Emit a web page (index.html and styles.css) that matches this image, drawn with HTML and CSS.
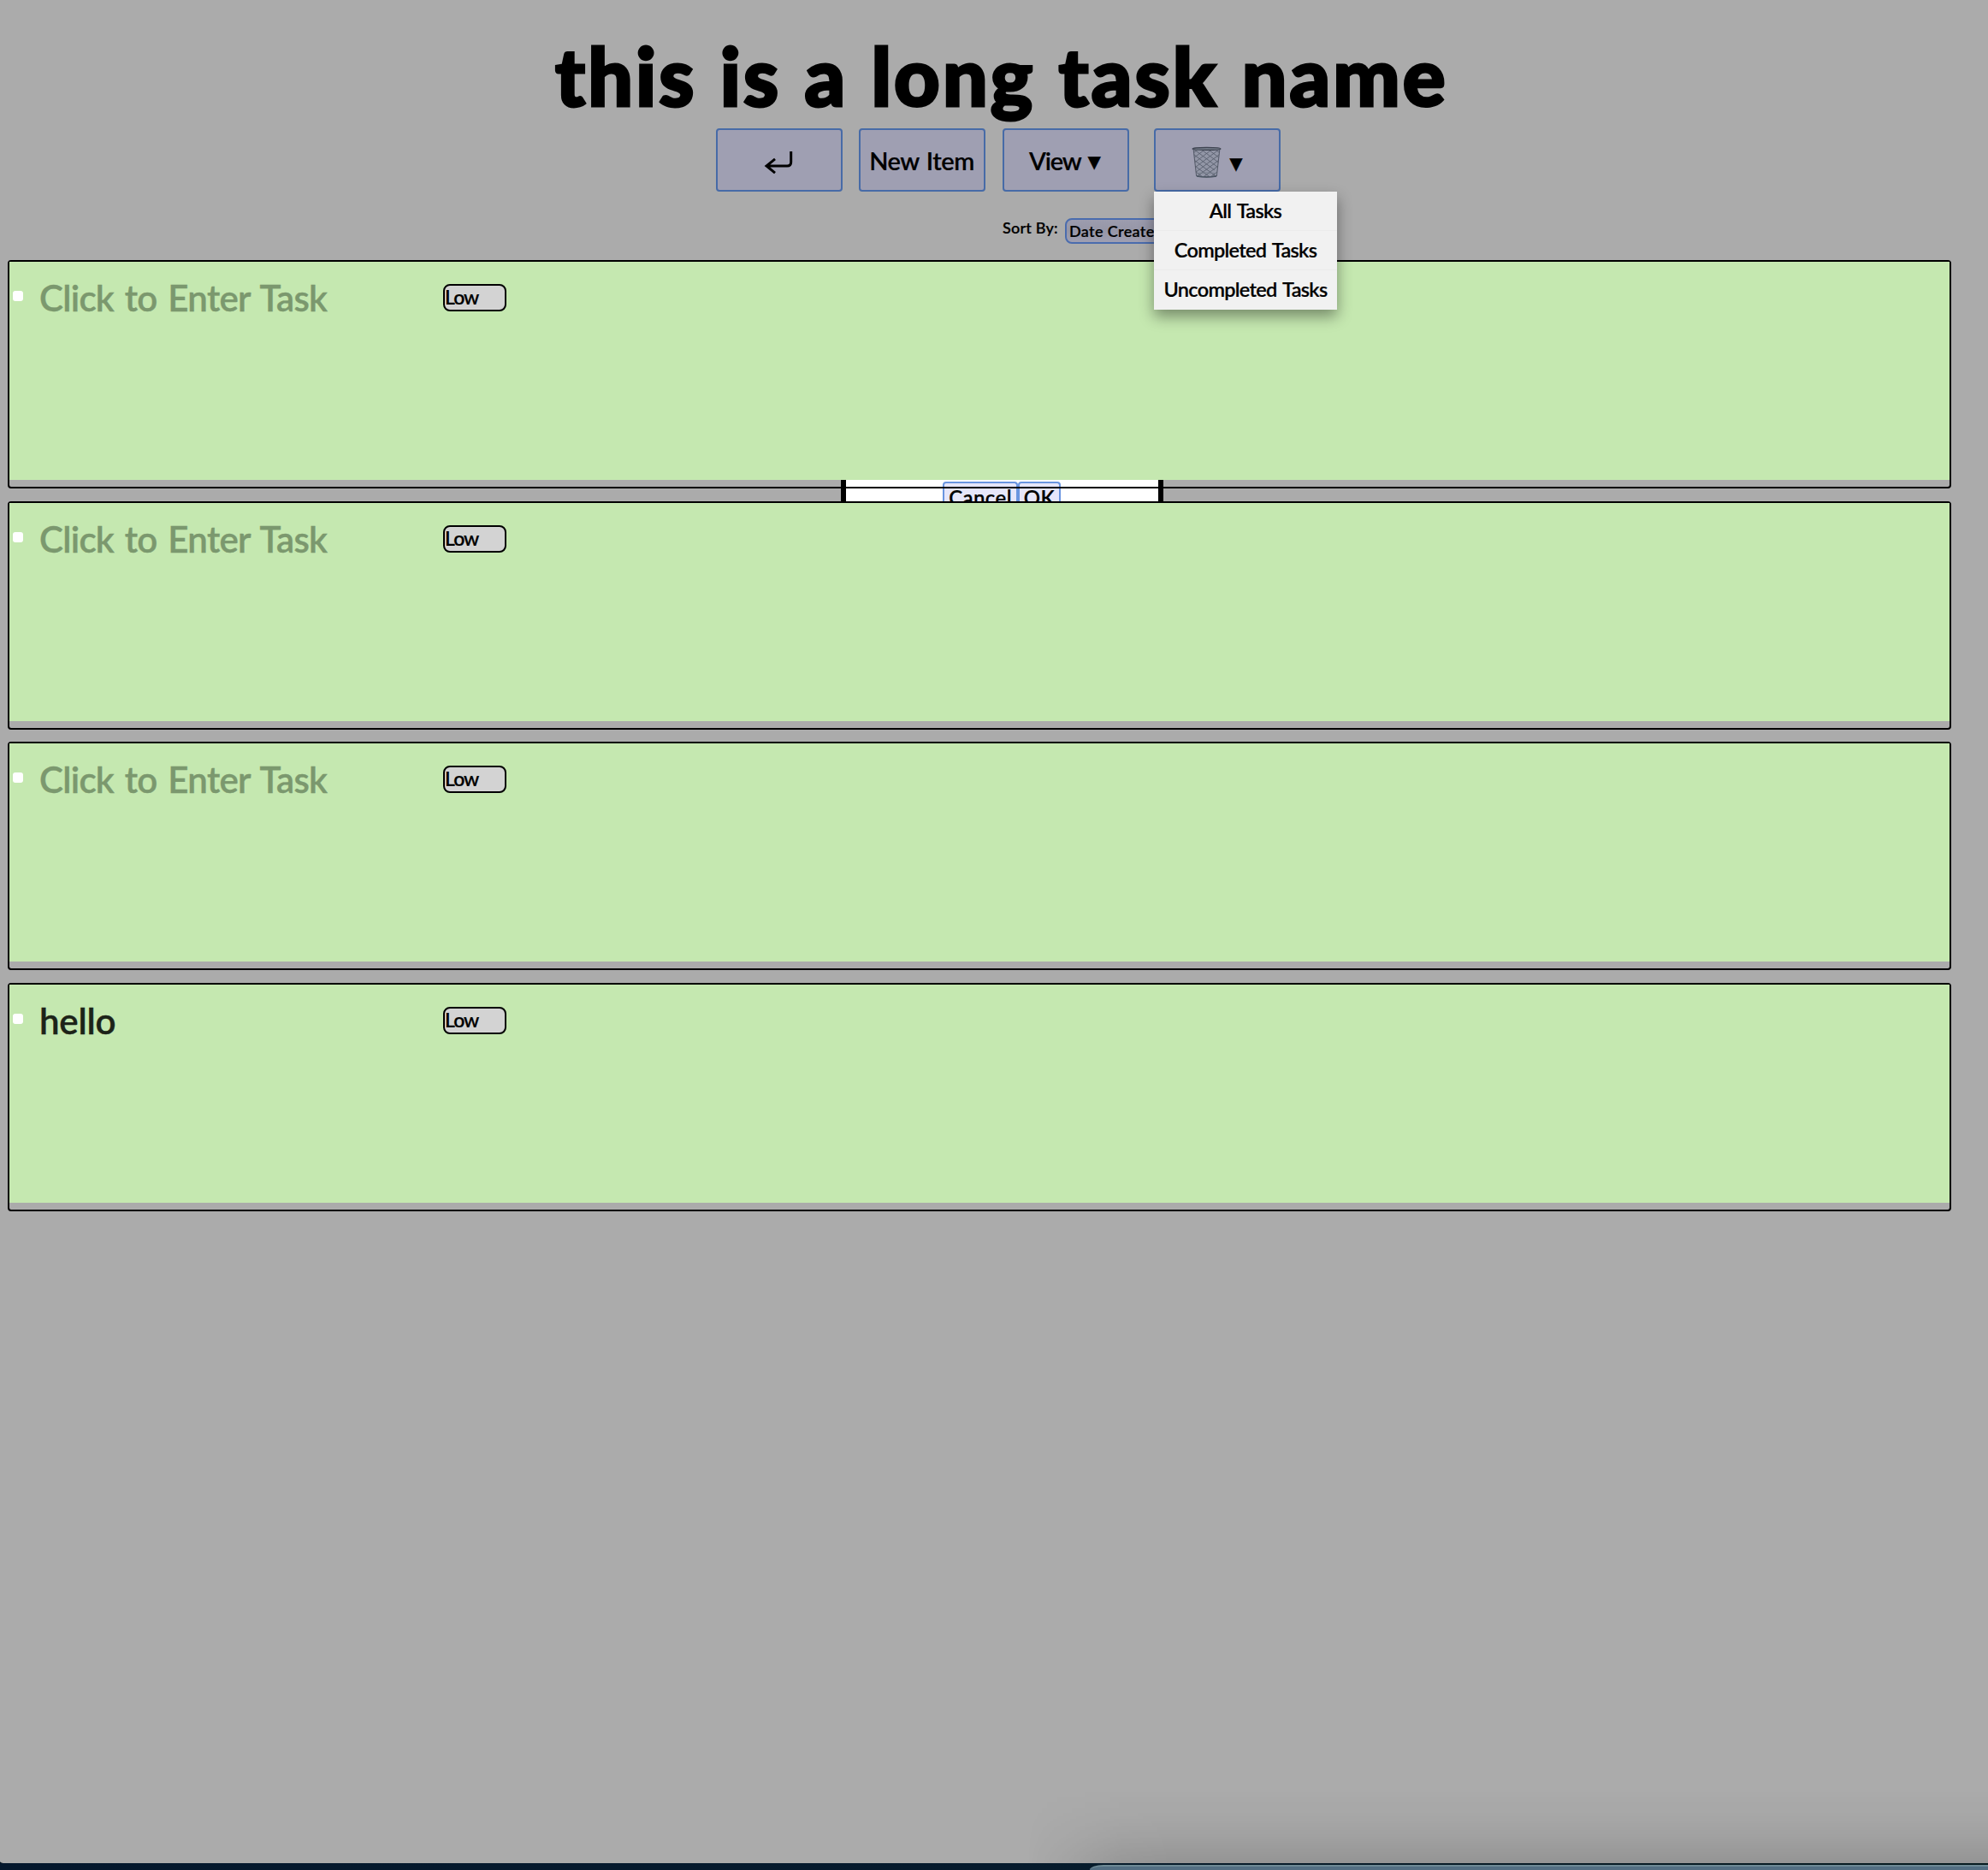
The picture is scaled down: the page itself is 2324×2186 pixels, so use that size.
FILE: index.html
```
<!DOCTYPE html>
<html lang="en">
<head>
<meta charset="utf-8">
<title>Task list</title>
<link rel="stylesheet" href="styles.css">
</head>
<body>
<main class="app">
  <h1 class="title">this is a long task name</h1>
  <nav class="toolbar">
    <button class="btn" aria-label="Back">
      <svg class="return" width="34" height="28" viewBox="0 0 34 28" fill="none" stroke="#000" stroke-width="3"><path d="M31.7 1V13.5Q31.7 18 27.2 18H2.5M13 9.8L3 18L13 26.2"/></svg>
    </button>
    <button class="btn btn-new">New Item</button>
    <button class="btn btn-view"><span class="view">View</span><span class="caret">▼</span></button>
    <div class="dropdown">
      <button class="btn btn-trash" aria-label="Clear tasks">
        <svg class="trash" width="35" height="37" viewBox="0 0 34 36" fill="none">
          <defs>
            <clipPath id="basket"><path d="M2 3H32L28.6 33.5Q17 36 5.4 33.5Z"/></clipPath>
          </defs>
          <path d="M2 3H32L28.6 33.5Q17 36 5.4 33.5Z" fill="#9296a6" stroke="#555b69"/>
          <g clip-path="url(#basket)" stroke="#565c6b" stroke-width=".8">
            <path d="M-6 3L26 27M-14 3L34 39M2 3L50 39M10 3L58 39M18 3L66 39M-22 3L26 39M-30 3L18 39M-38 3L10 39M26 3L74 39"/>
            <path d="M8 3L-40 39M16 3L-32 39M24 3L-24 39M32 3L-16 39M40 3L-8 39M48 3L0 39M56 3L8 39M64 3L16 39M72 3L24 39"/>
            <path d="M2 31.5Q17 28.5 32 31.5" stroke="#747b89"/>
          </g>
          <ellipse cx="17" cy="2.8" rx="16" ry="1.5" fill="#747b89" stroke="#3d4350" stroke-width="1.2"/>
          <path d="M5.8 34Q17 36 28.2 34" stroke="#4b5563" stroke-width="1.4"/>
        </svg>
        <span class="caret caret-low">▼</span>
      </button>
      <div class="menu">
        <a class="menu-item">All Tasks</a>
        <a class="menu-item">Completed Tasks</a>
        <a class="menu-item">Uncompleted Tasks</a>
      </div>
    </div>
  </nav>
  <div class="sort">
    <span class="sort-label">Sort By:</span>
    <div class="sort-select">Date Created</div>
  </div>
  <div class="modal">
    <button class="modal-btn">Cancel</button>
    <button class="modal-btn ok">OK</button>
  </div>
  <section class="cards">
    <div class="card"><div class="task"><span class="check"></span><span class="name empty">Click to Enter Task</span><span class="priority">Low</span></div></div>
    <div class="card"><div class="task"><span class="check"></span><span class="name empty">Click to Enter Task</span><span class="priority">Low</span></div></div>
    <div class="card"><div class="task"><span class="check"></span><span class="name empty">Click to Enter Task</span><span class="priority">Low</span></div></div>
    <div class="card"><div class="task"><span class="check"></span><span class="name">hello</span><span class="priority">Low</span></div></div>
  </section>
</main>
<footer class="desktop"><div class="shade"></div><div class="window"></div></footer>
</body>
</html>
```
FILE: styles.css
```
* {
  box-sizing: border-box;
}

body {
  margin: 0;
  height: 2186px;
  display: flex;
  flex-direction: column;
  background: #04121f;
  font-family: Lato, "Liberation Sans", sans-serif;
  font-weight: 600;
  -webkit-text-stroke: 0.2px currentColor;
  color: #000;
}

.app {
  flex: 1;
  position: relative;
  padding: 33px 0 0 9px;
  background: #ababab;
  border-bottom-left-radius: 6px 2px;
}

.title {
  margin: 0 0 7px 640px;
  font-size: 93px;
  font-weight: 900;
  line-height: 110px;
  letter-spacing: 3.1px;
  word-spacing: 2px;
  white-space: nowrap;
  -webkit-text-stroke: 3px #000;
}

.toolbar {
  display: flex;
  margin-left: 828px;
}

.btn {
  width: 148px;
  height: 74px;
  margin: 0 19px 0 0;
  padding: 0;
  display: flex;
  align-items: center;
  justify-content: center;
  border: 2px solid #476ba7;
  border-radius: 4px;
  background: #9f9fb2;
  font: inherit;
  font-size: 29px;
  color: #000;
  white-space: nowrap;
}

.btn-new {
  margin-right: 20px;
  padding-right: 1px;
  letter-spacing: -0.5px;
  word-spacing: 2px;
}

.return {
  margin: 6px 2px 0 0;
}

.btn-view {
  margin-right: 29px;
  padding-right: 2px;
  gap: 8px;
}

.view {
  letter-spacing: -1.2px;
}

.caret {
  font-family: "DejaVu Sans", sans-serif;
  font-size: 20px;
  font-weight: 400;
  line-height: 24px;
  margin-top: 3px;
}

.btn-trash {
  margin: 0;
  gap: 9px;
}

.trash {
  margin-top: 4px;
}

.caret-low {
  margin-top: 7px;
}

.dropdown {
  position: relative;
}

.menu {
  position: absolute;
  z-index: 10;
  top: 74px;
  left: 0;
  width: 214px;
  background: #f1f1f1;
  box-shadow: 0 8px 16px rgba(0, 0, 0, 0.4);
}

.menu-item {
  display: block;
  height: 46px;
  border-bottom: 1px solid #ebebeb;
  font-size: 23.5px;
  line-height: 45px;
  letter-spacing: -0.7px;
  word-spacing: 2px;
  text-align: center;
}

.menu-item:last-child {
  border-bottom: 0;
}

.sort {
  display: flex;
  align-items: flex-start;
  gap: 9px;
  height: 30px;
  margin: 31px 0 19px 1163px;
  font-size: 18px;
}

.sort-label {
  width: 64px;
  line-height: 22px;
  letter-spacing: 0.2px;
  white-space: nowrap;
}

.sort-select {
  width: 134px;
  height: 30px;
  padding-left: 3px;
  border: 2px solid #4a6cae;
  border-radius: 8px;
  background: linear-gradient(#9c9cae, #9696a7 48%, #9f9fb1);
  line-height: 27px;
  letter-spacing: 0.35px;
  white-space: nowrap;
}

.cards {
  position: relative;
  z-index: 1;
  display: flex;
  flex-direction: column;
  gap: 14.67px;
}

.card {
  width: 2272px;
  height: 267px;
  border: 2px solid #000;
  border-radius: 4px;
}

.task {
  display: flex;
  align-items: flex-start;
  height: 255px;
  padding: 16px 0 0 4px;
  background: #c5e8b0;
}

.check {
  width: 12px;
  height: 12px;
  margin: 18px 19px 0 0;
  border-radius: 3px;
  background: #fff;
}

.name {
  width: 472px;
  font-size: 42px;
  line-height: 52px;
  letter-spacing: -0.2px;
  color: #1c2318;
  -webkit-text-stroke-width: 0.4px;
}

.empty {
  color: #7b986e;
  letter-spacing: -0.7px;
  word-spacing: 3px;
}

.priority {
  width: 74px;
  height: 32px;
  margin-top: 10px;
  border: 2px solid #000;
  border-radius: 8px;
  background: #d3d3d3;
  font-size: 23px;
  line-height: 27px;
  letter-spacing: -1px;
}

.modal {
  position: absolute;
  z-index: 0;
  top: 400px;
  left: 983px;
  width: 377px;
  height: 200px;
  display: flex;
  align-items: flex-end;
  justify-content: center;
  padding-right: 1px;
  border: 6px solid #000;
  background: #fff;
}

.modal-btn {
  width: 88px;
  height: 31px;
  padding: 4px 0 0;
  border: 2px solid #6a95e0;
  border-bottom: 0;
  border-radius: 4px;
  background: #e6e6fa;
  font: inherit;
  font-size: 24px;
  line-height: 25px;
  letter-spacing: 0.4px;
  color: #000;
}

.ok {
  width: 50px;
}

.desktop {
  position: relative;
  z-index: 2;
  height: 8px;
  background: linear-gradient(90deg, #04182d, #061b2d 50%, #081c20);
}

.shade {
  position: absolute;
  bottom: 8px;
  left: 1200px;
  right: 0;
  height: 86px;
  background: linear-gradient(rgba(0, 0, 0, 0), rgba(0, 0, 0, 0.02) 35%, rgba(0, 0, 0, 0.06) 65%, rgba(0, 0, 0, 0.13));
  mask-image: linear-gradient(90deg, transparent, rgba(0, 0, 0, 0.35) 50px, rgba(0, 0, 0, 0.85) 110px, #000 170px);
}

.window {
  position: absolute;
  top: 2px;
  left: 1274px;
  right: 0;
  height: 6px;
  border-top: 2px solid #6d8994;
  border-radius: 16px 0 0 0 / 6px 0 0 0;
  background: #536f83;
}
```
